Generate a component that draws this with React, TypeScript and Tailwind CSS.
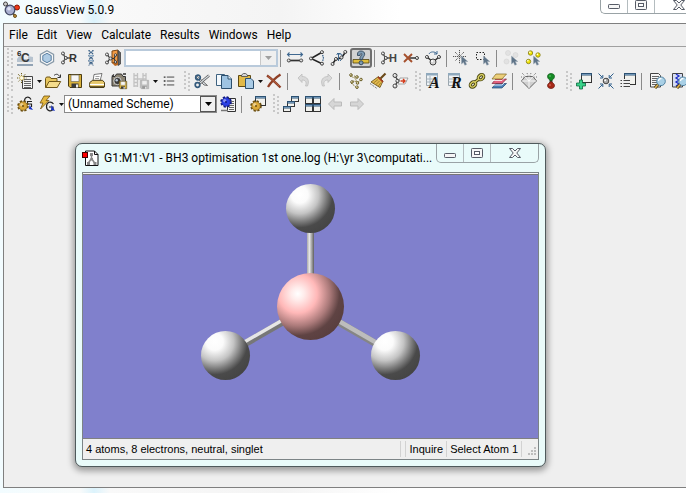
import React from 'react';

interface ToolButtonProps {
  label: string;
  icon: React.ReactNode;
  disabled?: boolean;
  pressed?: boolean;
}

interface DropArrowProps {
  label: string;
}

const Svg: React.FC<{ children: React.ReactNode; size?: number }> = ({ children, size = 16 }) => (
  <svg width={size} height={size} viewBox="0 0 16 16" fill="none" aria-hidden="true" className="shrink-0 overflow-visible">
    {children}
  </svg>
);

const Ball: React.FC<{ x: number; y: number; r?: number; fill?: string; stroke?: string }> = ({
  x,
  y,
  r = 1.5,
  fill = '#d8d8d8',
  stroke = '#333',
}) => (
  <>
    <circle cx={x} cy={y} r={r} fill={fill} stroke={stroke} strokeWidth="0.9" />
    <circle cx={x - r * 0.3} cy={y - r * 0.3} r={r * 0.35} fill="#fff" />
  </>
);

// Three-pronged fragment used by the molecule icons
const Fragment3: React.FC = () => (
  <>
    <path d="M2 3.500L4.500 8L2 12.500M4.500 8H9" stroke="#555" strokeWidth="1.400" />
    <Ball x={2} y={3.500} />
    <Ball x={2} y={12.500} />
    <Ball x={4.800} y={8} />
  </>
);

const Pointer: React.FC = () => (
  <path d="M8.500 6v8l2-1.800l1.300 3l1.800-.8l-1.300-2.900h2.500z" fill="#5f7488" stroke="#9aa8b4" strokeWidth="0.500" />
);

const Gear: React.FC<{ cx: number; cy: number; fill: string; stroke: string }> = ({ cx, cy, fill, stroke }) => (
  <>
    <circle cx={cx} cy={cy} r="4.800" stroke={stroke} strokeWidth="2" strokeDasharray="2.200 1.570" />
    <circle cx={cx} cy={cy} r="4.300" fill={fill} stroke={stroke} strokeWidth="0.600" />
    <circle cx={cx - 1.300} cy={cy - 1.300} r="1.600" fill="#fff" opacity="0.450" />
    <circle cx={cx} cy={cy} r="1" fill={stroke} />
  </>
);

const MiniWindow: React.FC<{ x: number; y: number; w: number; h: number }> = ({ x, y, w, h }) => (
  <>
    <rect x={x + 0.500} y={y + 0.500} width={w - 1} height={h - 1} fill="#f2f2ee" stroke="#333" />
    <rect x={x} y={y} width={w} height="2.500" fill="#2d5273" />
    <rect x={x + 1} y={y + 1} width={w - 2} height="0.700" fill="#8fb4d4" />
  </>
);

const Floppy: React.FC<{ x: number; y: number; s: number; grey?: boolean }> = ({ x, y, s, grey }) => (
  <g transform={`translate(${x} ${y}) scale(${s / 14})`}>
    <path d="M.5.5h13v13H2l-1.500-1.500z" fill={grey ? '#bdbdbd' : '#d9b13b'} stroke={grey ? '#aaa' : '#4a3c14'} />
    <path d="M3 1h8v6.500H3z" fill={grey ? '#eee' : '#f6f6f6'} stroke={grey ? '#b5b5b5' : '#77705a'} strokeWidth="0.700" />
    <path d="M3.500 9.500h7v4h-7z" fill={grey ? '#999' : '#3a3a3a'} />
    <path d="M8 10.500h2v3H8z" fill="#eee" />
  </g>
);

const Lens: React.FC = () => (
  <>
    <path d="M8 11.500l-3 3.500" stroke="#3f3214" strokeWidth="3" />
    <path d="M8 11.500l-3 3.500" stroke="#d9ad4a" strokeWidth="1.800" />
    <circle cx="11" cy="8.300" r="4.300" fill="#a9d0e6" stroke="#5585a3" />
    <path d="M8.500 8a2.700 2.700 0 0 1 3-2.500" stroke="#fff" strokeWidth="1.300" />
  </>
);

const Lines: React.FC<{ x: number; y: number; w: number; n: number; color?: string }> = ({
  x,
  y,
  w,
  n,
  color = '#666',
}) => (
  <>
    {Array.from({ length: n }, (_, i) => (
      <rect key={i} x={x} y={y + i * 2} width={w} height="1" fill={color} />
    ))}
  </>
);

const icons = {
  element: (
    <Svg>
      <path d="M3 5h4v4h4v-3l5 1v5H0V9z" fill="#b7c3cf" />
      <path d="M0 15h16" stroke="#7b90a5" strokeWidth="1.600" />
      <text x="0" y="6" fontFamily="Liberation Sans, sans-serif" fontWeight="700" fontSize="8" fill="#222">6</text>
      <text x="4" y="12" fontFamily="Liberation Sans, sans-serif" fontWeight="700" fontSize="12" fill="#3a3a3a">C</text>
    </Svg>
  ),
  ring: (
    <Svg>
      <path d="M8 .8l6.600 3.600v7.200L8 15.200L1.400 11.600V4.400z" fill="#f7f7f7" stroke="#8799a8" strokeWidth="1.200" />
      <path d="M8 3.300l4.200 2.300v4.800L8 12.700l-4.200-2.300V5.600z" fill="#aecbe4" stroke="#5a7fa1" />
    </Svg>
  ),
  rgroup: (
    <Svg>
      <Fragment3 />
      <text x="8" y="12" fontFamily="Liberation Sans, sans-serif" fontWeight="700" fontSize="11" fill="#333">R</text>
    </Svg>
  ),
  helix: (
    <Svg>
      <path d="M6 0c0 2.500 4 2.500 4 5s-4 3-4 5.500 4 2.500 4 5M10 0c0 2.500-4 2.500-4 5s4 3 4 5.500-4 2.500-4 5" stroke="#3e6388" strokeWidth="1.400" strokeDasharray="1.600 .6" />
      <path d="M6 5.500h4M6 10.500h4" stroke="#8fb0cc" />
    </Svg>
  ),
  fragmentLibrary: (
    <Svg>
      <path d="M7 1l6-1v11l-6 2z" fill="#f29b45" stroke="#7d4713" />
      <path d="M13 .5l2.500 2V14l-2.500 1.500z" fill="#666" stroke="#333" strokeWidth="0.700" />
      <path d="M7 13l6-2v4L10 16z" fill="#b96620" />
      <path d="M2 4l3 4.500L2 13M5 8.500h4l2 4M9 8.500l2-4" stroke="#333" strokeWidth="1.200" />
      <Ball x={2} y={4.500} />
      <Ball x={2} y={12.500} />
      <Ball x={5.500} y={8.500} />
      <Ball x={10.500} y={5} r={1.200} />
      <Ball x={10.500} y={12} r={1.200} />
    </Svg>
  ),
  bond: (
    <Svg>
      <path d="M0 4.500h16M2.500 2.500L.5 4.500l2 2M13.500 2.500l2 2-2 2" stroke="#3f6890" strokeWidth="1.100" />
      <path d="M2 10.500h12" stroke="#333" strokeWidth="1.700" />
      <Ball x={1.800} y={10.500} />
      <Ball x={14.200} y={10.500} />
    </Svg>
  ),
  angle: (
    <Svg>
      <path d="M12.500 2.500L2 8.500l10.500 5" stroke="#222" strokeWidth="1.500" />
      <path d="M13.500 5c1.200 2 1.200 4 0 6" stroke="#3f6890" strokeDasharray="1.500 .8" strokeWidth="1.300" />
      <Ball x={13} y={2.200} />
      <Ball x={2} y={8.500} />
      <Ball x={13} y={13.700} />
    </Svg>
  ),
  dihedral: (
    <Svg>
      <path d="M1.500 14l3.500-5 5.500-1 4-6" stroke="#222" strokeWidth="1.500" />
      <path d="M7.500 11V3.500M5.500 5l2-2 2 2M6 3.500h3.500c2.500 1 2 5-.5 7.500" stroke="#3f6890" />
      <Ball x={1.600} y={14} />
      <Ball x={5} y={9} />
      <Ball x={10.500} y={7.500} />
      <Ball x={14.300} y={2} />
    </Svg>
  ),
  inquire: (
    <Svg>
      <path d="M0 9.500h16v3.500H0z" fill="#e0be3c" stroke="#51430f" strokeWidth="0.800" />
      <path d="M4.500 5.500V4c0-2 1.500-3 3.500-3s3.700 1.200 3.700 3.200S9.500 7 9.500 9.500H6.800c0-3.500 2-3.500 2-5.200 0-1.200-1.700-1.200-1.700 1.200z" fill="#7f9bb3" stroke="#344a5e" strokeWidth="0.900" />
      <circle cx="8.100" cy="12.800" r="2" fill="#7f9bb3" stroke="#344a5e" />
    </Svg>
  ),
  addValence: (
    <Svg>
      <Fragment3 />
      <text x="8" y="12" fontFamily="Liberation Sans, sans-serif" fontWeight="700" fontSize="11" fill="#444">H</text>
    </Svg>
  ),
  deleteAtom: (
    <Svg>
      <path d="M4 8h10" stroke="#333" strokeWidth="1.500" />
      <path d="M1 4l8 8M9 4l-8 8" stroke="#a5502d" strokeWidth="1.900" />
      <Ball x={14} y={8} />
    </Svg>
  ),
  invert: (
    <Svg>
      <path d="M4 4c1-2.500 6-3 8 0M12 1v3H9" stroke="#3f6890" />
      <path d="M2 7l6 5 6-5" stroke="#333" strokeWidth="1.600" />
      <Ball x={2} y={7} />
      <Ball x={14} y={7} />
      <Ball x={8} y={12} r={3} />
    </Svg>
  ),
  selectAtom: (
    <Svg>
      <path d="M6.500 0v14M0 6.500h13M2 2l9 9M11 2l-9 9" stroke="#444" strokeWidth="0.900" strokeDasharray="1.200 .8" />
      <Pointer />
    </Svg>
  ),
  marquee: (
    <Svg>
      <rect x="1.500" y="2.500" width="8" height="7" stroke="#222" strokeDasharray="1.500 1.500" />
      <Pointer />
    </Svg>
  ),
  deselectAll: (
    <Svg>
      <circle cx="5" cy="3" r="2.500" fill="#e2e2e2" stroke="#d4d4d4" strokeWidth="0.600" />
      <circle cx="12.500" cy="5" r="2.500" fill="#e2e2e2" stroke="#d4d4d4" strokeWidth="0.600" />
      <circle cx="3.500" cy="11.500" r="2.500" fill="#e2e2e2" stroke="#d4d4d4" strokeWidth="0.600" />
      <Pointer />
    </Svg>
  ),
  selectAll: (
    <Svg>
      <Ball x={5.500} y={3} r={2.200} fill="#f2e600" stroke="#8c8420" />
      <Ball x={13} y={5} r={2.200} fill="#f2e600" stroke="#8c8420" />
      <Ball x={3.500} y={11.500} r={2.200} fill="#f2e600" stroke="#8c8420" />
      <Pointer />
    </Svg>
  ),
  newDoc: (
    <Svg>
      <path d="M5.500 3.500h10v12h-10z" fill="#f5f5f5" stroke="#444" />
      <Lines x={7} y={6} w={7} n={5} />
      <path d="M4.500 0v10M0 5h9.500M1 1l7.500 8M8.500 1L1 9" stroke="#6b5b16" strokeDasharray="1 .8" />
      <circle cx="4.700" cy="5" r="2" fill="#fffbe6" stroke="#d8bb4c" strokeWidth="0.500" />
    </Svg>
  ),
  open: (
    <Svg>
      <path d="M.5 14.500V5.500l1-1.500h3.500l1 1.500h6v9z" fill="#e8c75e" stroke="#6e5618" />
      <path d="M.8 14.500L4 8.500h11.700l-3.500 6z" fill="#f6dd8c" stroke="#6e5618" />
      <path d="M9 2.500c2-2 4.500-1.500 5.500 1M15.500 1.500v3h-3" stroke="#333" />
    </Svg>
  ),
  save: (
    <Svg>
      <Floppy x={1} y={1} s={14} />
    </Svg>
  ),
  print: (
    <Svg>
      <path d="M5 1.500l8-1-2 7.500H4z" fill="#fff" stroke="#555" strokeWidth="0.800" />
      <path d="M6.500 3.500h4M6 5.500h4" stroke="#888" strokeWidth="0.800" />
      <path d="M.7 9.500l3-2.200h9.800l2 2.200v4.500H.7z" fill="#e6c768" stroke="#4b3d16" />
      <path d="M1 11.500h14" stroke="#fff" strokeWidth="1.200" />
      <path d="M1 13.500h14v1.500H1z" fill="#4b3d16" />
    </Svg>
  ),
  camera: (
    <Svg>
      <path d="M1 3.500h3l1.500-2.500h5l1.500 2.500h2.500V13H1z" fill="#8c8574" stroke="#333" />
      <path d="M1 3.500l2-2M12 1h3" stroke="#333" strokeWidth="1.400" />
      <circle cx="6.500" cy="8" r="3.700" fill="#3b3b3b" stroke="#ddd" strokeWidth="0.900" />
      <circle cx="5.700" cy="7.200" r="1.200" fill="#bcd" />
      <Floppy x={8} y={8} s={8} />
    </Svg>
  ),
  movie: (
    <Svg>
      <path d="M1 0v14M4.500 0v14M10 0v14M13 0v7M1 2.500h3.500M1 6h12M1 9.500h3.500M10 2.500h3M1 13h3.500" stroke="#c2c2c2" strokeWidth="1.300" />
      <Floppy x={7} y={7} s={9} grey />
    </Svg>
  ),
  list: (
    <Svg size={14}>
      <path d="M5.500 3.500H14M5.500 8H14M5.500 12.500H14" stroke="#333" />
      <path d="M2 3.500h2M2 8h2M2 12.500h2" stroke="#333" strokeWidth="1.500" />
    </Svg>
  ),
  cut: (
    <Svg>
      <path d="M2 2l11.500 10.500L10 12 1.500 3.500z" fill="#d7dde2" stroke="#555" strokeWidth="0.800" />
      <path d="M15 2.500L5.500 10.500" stroke="#555" strokeWidth="2.600" />
      <path d="M15 2.500L6 10" stroke="#d7dde2" strokeWidth="1.200" />
      <circle cx="3.500" cy="12" r="2.300" stroke="#345a7c" strokeWidth="1.700" />
      <circle cx="4" cy="4.500" r="2.300" stroke="#345a7c" strokeWidth="1.700" />
    </Svg>
  ),
  copy: (
    <Svg>
      <path d="M.5 1.500h8v11h-8z" fill="#f4f9fd" stroke="#3e6280" />
      <path d="M5.500 2.500h6.500l3.500 3.500v9.500h-10z" fill="#9fc4e2" stroke="#2d506e" />
      <path d="M12 2.500V6h3.500" fill="#e8f2fa" stroke="#2d506e" />
    </Svg>
  ),
  paste: (
    <Svg>
      <path d="M.5 2.500h12v11H.5z" fill="#e1b948" stroke="#5f4a12" />
      <path d="M3.500 3.500V2l2-1.500h2L9.500 2v1.500z" fill="#d5d5d5" stroke="#444" strokeWidth="0.800" />
      <path d="M7.500 5.500h5.500l2.500 2.500v7.500h-8z" fill="#a9cbe6" stroke="#2d506e" />
    </Svg>
  ),
  remove: (
    <Svg>
      <path d="M1 2.500c5 3.500 9 7.500 13.500 12M14.500 1.500C9 5 5 9 2 14" stroke="#8f3f26" strokeWidth="2.300" />
      <path d="M2 3.500c5 3.500 7 5.500 11 9.500" stroke="#c66b4a" strokeWidth="0.700" />
    </Svg>
  ),
  undo: (
    <Svg>
      <path d="M2 5l4-4v2.500c5 0 8 3.500 5.500 9.500h-2c1.500-4 0-6-3.500-6V9.500z" fill="#d9d9d9" stroke="#bcbcbc" strokeWidth="0.800" />
    </Svg>
  ),
  redo: (
    <Svg>
      <path d="M14 5l-4-4v2.500c-5 0-8 3.500-5.500 9.500h2c-1.500-4 0-6 3.500-6V9.500z" fill="#d9d9d9" stroke="#bcbcbc" strokeWidth="0.800" />
    </Svg>
  ),
  rebond: (
    <Svg>
      <path d="M2 3l5 2 2 4M5 8l5 1 4-3M3 10l5 4M6 3l4 1" stroke="#8b7c36" strokeDasharray="1.500 .8" />
      <Ball x={3} y={2} r={1.300} fill="#d8c98a" stroke="#5e5420" />
      <Ball x={9} y={4} r={1.300} fill="#d8c98a" stroke="#5e5420" />
      <Ball x={13} y={6.500} r={1.300} fill="#d8c98a" stroke="#5e5420" />
      <Ball x={4} y={9} r={1.300} fill="#d8c98a" stroke="#5e5420" />
      <Ball x={9.500} y={10} r={1.300} fill="#d8c98a" stroke="#5e5420" />
      <Ball x={9} y={14.200} r={1.300} fill="#d8c98a" stroke="#5e5420" />
    </Svg>
  ),
  clean: (
    <Svg>
      <path d="M15.500.5L10.500 5.500" stroke="#6b4a1a" strokeWidth="2.200" />
      <path d="M8.500 3.500l4.500 4.500-3 6.500L1 9z" fill="#e3b94c" stroke="#5f4a12" strokeWidth="0.800" />
      <path d="M8 4l5 5" stroke="#a33a22" strokeWidth="1.600" />
      <path d="M8 6.500l-4.500 3.500M9.500 8l-4 4M11 9.500l-3 4" stroke="#8a6a1c" strokeWidth="0.700" />
      <path d="M0 10.500l7 5" stroke="#555" strokeDasharray="1 1" />
    </Svg>
  ),
  symmetrize: (
    <Svg>
      <path d="M3 3l3 4.500L3 13M6 7.500h9" stroke="#444" strokeWidth="1.300" />
      <path d="M8 5h8l-3 6H6z" fill="#f7f7f7" stroke="#888" strokeWidth="0.700" />
      <path d="M8.500 8h4M11 6l2 2-2 2" stroke="#d33a1a" strokeWidth="1.400" />
      <Ball x={3} y={2.500} r={2} />
      <Ball x={3} y={13} r={2} />
      <Ball x={5.500} y={8} r={1.600} />
    </Svg>
  ),
  atomList: (
    <Svg>
      <path d="M1.500.500h11v12h-11z" fill="#eef3f7" stroke="#9aa5ad" />
      <path d="M1 0h12v2.500H1z" fill="#8fa9bd" />
      <path d="M1.500 6h11M1.500 9h11M5 3v9" stroke="#a5b2bc" />
      <text x="4" y="15" fontFamily="Liberation Serif, serif" fontStyle="italic" fontWeight="700" fontSize="16" fill="#111">A</text>
    </Svg>
  ),
  redundant: (
    <Svg>
      <path d="M1.500.500h11v12h-11z" fill="#eef3f7" stroke="#9aa5ad" />
      <path d="M1 0h12v2.500H1z" fill="#8fa9bd" />
      <path d="M1.500 6h11M1.500 9h11" stroke="#a5b2bc" />
      <text x="4" y="15" fontFamily="Liberation Serif, serif" fontStyle="italic" fontWeight="700" fontSize="16" fill="#111">R</text>
    </Svg>
  ),
  link: (
    <Svg>
      <g stroke="#4b4712" strokeWidth="3.200">
        <ellipse cx="4" cy="11.500" rx="3" ry="2.200" transform="rotate(-40 4 11.500)" />
        <ellipse cx="12" cy="4.200" rx="3" ry="2.200" transform="rotate(-40 12 4.200)" />
        <path d="M5.500 9.500L10 6" />
      </g>
      <g stroke="#d6cd62" strokeWidth="1.300">
        <ellipse cx="4" cy="11.500" rx="3" ry="2.200" transform="rotate(-40 4 11.500)" />
        <ellipse cx="12" cy="4.200" rx="3" ry="2.200" transform="rotate(-40 12 4.200)" />
        <path d="M5.500 9.500L10 6" />
      </g>
    </Svg>
  ),
  layers: (
    <Svg>
      <path d="M1 15l4-4.500h10.500L11 15z" fill="#4a80b8" stroke="#24486c" strokeWidth="0.700" />
      <path d="M1 10.500L5 6h10.500L11 10.500z" fill="#e0607e" stroke="#7d2438" strokeWidth="0.700" />
      <path d="M1 6l4-5h10.500L11 6z" fill="#edd07c" stroke="#7d6520" strokeWidth="0.700" />
      <path d="M1.500 7.500H11l4-4M1.500 12H11l4-4" stroke="#fff" strokeWidth="0.800" />
    </Svg>
  ),
  pointGroup: (
    <Svg>
      <path d="M4 3.500h8l3.500 4.500L8 15.500.5 8z" fill="#cfcfcf" stroke="#666" />
      <path d="M4 3.500L8 8l4-4.500M1 8h14M8 8v7M8 3.500V8" stroke="#fff" strokeWidth="0.800" />
      <path d="M1 0l3 3M6 0l1 2.500M15 0l-3 3M10 0L9 2.500M0 4h2.500M16 4h-2.500" stroke="#777" strokeDasharray="1 1" />
    </Svg>
  ),
  orbitals: (
    <Svg>
      <path d="M8 7v3" stroke="#444" strokeWidth="3" />
      <path d="M8 8C5 6 4.500 4.500 4.500 3.500 4.500 1.500 6 .5 8 .5s3.500 1 3.500 3C11.500 4.500 11 6 8 8z" fill="#158a25" stroke="#0b5515" strokeWidth="0.700" />
      <path d="M8 8.500c-3 2-3.500 3-3.500 4 0 2 1.500 3 3.500 3s3.500-1 3.500-3c0-1-.5-2-3.500-4z" fill="#a62817" stroke="#67150b" strokeWidth="0.700" />
      <circle cx="7" cy="3" r="0.800" fill="#6cd57a" />
      <circle cx="7" cy="12" r="0.800" fill="#e88270" />
    </Svg>
  ),
  addView: (
    <Svg>
      <MiniWindow x={5} y={0} w={11} h={10} />
      <path d="M3.500 7h3v3h3v3h-3v3h-3v-3h-3v-3h3z" fill="#3ad28a" stroke="#0e6b40" strokeWidth="0.800" />
    </Svg>
  ),
  center: (
    <Svg>
      <path d="M.5.500l4 4M15.500.500l-4 4M.5 15.500l4-4M15.500 15.500l-4-4M4.800 2v3H2M11.200 2v3H14M4.800 14v-3H2M11.200 14v-3H14" stroke="#2f5f8c" />
      <Ball x={8} y={8} r={2.800} fill="#aaa" />
    </Svg>
  ),
  viewList: (
    <Svg>
      <MiniWindow x={4} y={0} w={12} h={12} />
      <path d="M0 6h10v9.500H0z" fill="#efefef" />
      <path d="M3.500 7.500H10M3.500 10.500H10M3.500 13.500H10M.5 7.500H2M.5 10.500H2M.5 13.500H2" stroke="#444" />
    </Svg>
  ),
  viewFile: (
    <Svg>
      <path d="M.5.500h8l2 2v11.500H.5z" fill="#f5f5f5" stroke="#444" />
      <Lines x={2} y={3} w={7} n={5} />
      <Lens />
    </Svg>
  ),
  viewPlot: (
    <Svg>
      <path d="M.5.500h10v13.500H.5z" fill="#d5dcf2" stroke="#444" />
      <path d="M4 1l3 2-3 2 3 2-3 2 3 2-3 2" stroke="#1c2cc8" strokeWidth="1.300" />
      <Lens />
    </Svg>
  ),
  gaussSetup: (
    <Svg>
      <path d="M14 3.500C12-.5 7.500 1 7.500 5M15 5.500h-4.500v2.500h4v3" stroke="#222" strokeWidth="1.200" />
      <path d="M12.500 9l3.500 5-4-1z" fill="#1631c4" />
      <Gear cx={6} cy={10} fill="#dba93a" stroke="#6e500f" />
    </Svg>
  ),
  quickLaunch: (
    <Svg>
      <path d="M14.500 8C12 4.500 7.500 6 7.500 10.500S12 16 14 13.500V11h-4" stroke="#222" strokeWidth="1.200" />
      <path d="M5 0h6L7 4.500h3L1.500 13l2.500-6H1z" fill="#e5b83f" stroke="#6e500f" strokeWidth="0.800" />
      <path d="M12.500 9l3.500 6-4-1z" fill="#1631c4" />
    </Svg>
  ),
  schemes: (
    <Svg>
      <path d="M7.500 2.500h8v13h-8z" fill="#f5f5f5" stroke="#333" />
      <Lines x={9} y={5} w={5} n={5} />
      <Gear cx={6} cy={6} fill="#2a3fe6" stroke="#101a86" />
      <path d="M1 14.500h7" stroke="#777" strokeWidth="1.500" />
    </Svg>
  ),
  windowSetup: (
    <Svg>
      <MiniWindow x={5} y={0} w={11} h={10} />
      <Gear cx={6} cy={10} fill="#dba93a" stroke="#6e500f" />
    </Svg>
  ),
  cascade: (
    <Svg>
      <MiniWindow x={8} y={0} w={8} h={6} />
      <MiniWindow x={4} y={5} w={8} h={6} />
      <MiniWindow x={0} y={10} w={8} h={6} />
    </Svg>
  ),
  tile: (
    <Svg>
      <MiniWindow x={0} y={0} w={8} h={8} />
      <MiniWindow x={8} y={0} w={8} h={8} />
      <MiniWindow x={0} y={8} w={8} h={8} />
      <MiniWindow x={8} y={8} w={8} h={8} />
    </Svg>
  ),
  back: (
    <Svg>
      <path d="M1.500 8L7 2.500V6h7.500v4H7v3.500z" fill="#d6d6d6" stroke="#bbb" />
    </Svg>
  ),
  forward: (
    <Svg>
      <path d="M14.500 8L9 2.500V6H1.500v4H9v3.500z" fill="#d6d6d6" stroke="#bbb" />
    </Svg>
  ),
};

const ToolButton: React.FC<ToolButtonProps> = ({ label, icon, disabled, pressed }) => (
  <button
    type="button"
    aria-label={label}
    title={label}
    disabled={disabled}
    className={`w-[22px] h-5 shrink-0 flex items-center justify-center rounded-[3px] ${
      pressed ? 'bg-[#d2d2d2] border-2 border-[#6e6e6e]' : ''
    }`}
  >
    {icon}
  </button>
);

const DropArrow: React.FC<DropArrowProps> = ({ label }) => (
  <button type="button" aria-label={label} className="w-1.5 h-5 shrink-0 flex items-center justify-center">
    <svg width="5" height="3" viewBox="0 0 5 3" aria-hidden="true">
      <path d="M0 0h5L2.500 3z" fill="#111" />
    </svg>
  </button>
);

const Grip: React.FC = () => (
  <svg width="10" height="20" viewBox="0 0 10 20" aria-hidden="true" className="shrink-0">
    {[1, 5, 9, 13, 17].map((y) => (
      <g key={y}>
        <rect x="3" y={y - 1} width="2" height="2" fill="#c8c8c8" />
        <rect x="7" y={y + 1} width="2" height="2" fill="#c8c8c8" />
      </g>
    ))}
  </svg>
);

const Sep: React.FC<{ wide?: boolean }> = ({ wide }) => (
  <div className={`shrink-0 h-[17px] flex pl-0.5 ${wide ? 'w-2' : 'w-1.5'}`}>
    <div className="w-px bg-[#8a8a8a]" />
  </div>
);

const ToolRow: React.FC<{ children: React.ReactNode }> = ({ children }) => (
  <div className="h-[23px] flex items-start gap-px pt-px">{children}</div>
);

const ToolBar: React.FC<{ label: string; children: React.ReactNode }> = ({ label, children }) => (
  <div role="toolbar" aria-label={label} className="flex items-center shrink-0">
    <Grip />
    {children}
  </div>
);

const CaptionButtons: React.FC<{ className?: string }> = ({ className = '' }) => (
  <div className={`flex shrink-0 border border-t-0 border-[#9aa3a6] rounded-b-[5px] divide-x divide-[#b4bcbf] ${className}`}>
    <button type="button" aria-label="Minimize" className="w-[27px] shrink-0 flex items-center justify-center pt-1">
      <svg width="12" height="5" viewBox="0 0 12 5" aria-hidden="true">
        <rect x="0.5" y="0.5" width="11" height="4" rx="0.8" fill="#f6f6f6" stroke="#565b66" />
      </svg>
    </button>
    <button type="button" aria-label="Maximize" className="w-[27px] shrink-0 flex items-center justify-center">
      <svg width="12" height="10" viewBox="0 0 12 10" aria-hidden="true">
        <rect x="0.5" y="0.5" width="11" height="9" rx="0.8" fill="#f6f6f6" stroke="#565b66" />
        <rect x="3.5" y="3.500" width="5" height="3" fill="#fff" stroke="#565b66" />
      </svg>
    </button>
    <button type="button" aria-label="Close" className="w-[47px] shrink-0 flex items-center justify-center">
      <svg width="12" height="10" viewBox="0 0 12 10" aria-hidden="true">
        <path d="M.5.500h3L6 3l2.500-2.500h3L7.800 5l3.700 4.500h-3L6 7 3.500 9.500h-3L4.200 5z" fill="#f6f6f6" stroke="#565b66" />
      </svg>
    </button>
  </div>
);

const menus = ['File', 'Edit', 'View', 'Calculate', 'Results', 'Windows', 'Help'];

const hydrogens = [
  { x: 227.500, y: 33.500 },
  { x: 142.500, y: 180.500 },
  { x: 312.500, y: 180.500 },
];

const Molecule: React.FC = () => (
  <svg viewBox="0 0 455 263" className="block w-full" role="img" aria-label="BH3 molecule">
    <defs>
      <radialGradient id="hydrogen" cx="0.280" cy="0.220" r="0.860">
        <stop offset="0" stopColor="#fff" />
        <stop offset="0.200" stopColor="#fbfbfb" />
        <stop offset="0.450" stopColor="#c4c4c4" />
        <stop offset="0.640" stopColor="#7c7c7c" />
        <stop offset="0.780" stopColor="#4a4a4a" />
        <stop offset="1" stopColor="#444" />
      </radialGradient>
      <radialGradient id="boron" cx="0.310" cy="0.310" r="0.800">
        <stop offset="0" stopColor="#fff" />
        <stop offset="0.120" stopColor="#ffeceb" />
        <stop offset="0.360" stopColor="#ffb8b8" />
        <stop offset="0.600" stopColor="#ab7a7a" />
        <stop offset="0.780" stopColor="#5f4343" />
        <stop offset="1" stopColor="#573d3d" />
      </radialGradient>
      <linearGradient id="stick" x1="224" x2="231" y1="0" y2="0" gradientUnits="userSpaceOnUse">
        <stop offset="0" stopColor="#aaa" />
        <stop offset="0.350" stopColor="#e6e6e6" />
        <stop offset="1" stopColor="#5f5f5f" />
      </linearGradient>
    </defs>
    <path d="M224 50h7v60h-7z" fill="url(#stick)" />
    <path d="M142.500 180l85-49" stroke="#777" strokeWidth="7" />
    <path d="M141.500 178.500l85-49" stroke="#e6e6e6" strokeWidth="3.500" />
    <path d="M312.500 180l-85-49" stroke="#858585" strokeWidth="7" />
    <path d="M313 179l-85-49" stroke="#bdbdbd" strokeWidth="4.500" />
    {hydrogens.map((h) => (
      <circle key={`${h.x}-${h.y}`} cx={h.x} cy={h.y} r="24.500" fill="url(#hydrogen)" />
    ))}
    <circle cx="227.500" cy="131.500" r="33.500" fill="url(#boron)" />
  </svg>
);

const ViewWindow: React.FC = () => (
  <section className="w-[471px] px-1.5 pb-1.5 flex flex-col bg-[#e9fbfa] border border-[#4f5a5c] rounded-[7px] shadow-[0_2px_6px_2px_rgba(0,0,0,0.35)]">
    <header className="h-7 flex items-start">
      <h2 className="flex-1 min-w-0 h-7 flex items-center gap-[5px] whitespace-nowrap">
        <svg width="17" height="16" viewBox="0 0 17 16" aria-hidden="true" className="shrink-0">
          <path d="M3.500 1h9l3.500 3.500V15.500H3.500z" fill="#fff" stroke="#111" />
          <path d="M12.500 1v3.500H16" stroke="#111" fill="none" />
          <path d="M9.500 3.500v5l-3.500 5M9.500 8.500l3.500 5" stroke="#888" strokeWidth="1.500" fill="none" />
          <path d="M8 3h3v3H8zM5 12h3v3H5zM11.500 12h3v3h-3zM8.500 8h2.500v2.500H8.500z" fill="#888" />
          <rect x="0.5" y="2.500" width="5" height="5" fill="#f00" stroke="#400" />
        </svg>
        G1:M1:V1 - BH3 optimisation 1st one.log (H:\yr 3\computati...
      </h2>
      <CaptionButtons className="h-[19px]" />
    </header>
    <div className="border border-[#7c8486]">
      <div className="border-t border-[#f4f4f4] bg-[#8080cc]">
        <div className="border-t border-[#777]">
          <Molecule />
        </div>
      </div>
      <footer className="h-[21px] pl-[3px] flex items-center bg-[#efefef] border-t border-[#808080] font-['Liberation_Sans',sans-serif] text-[11px] leading-4">
        <span className="flex-1">4 atoms, 8 electrons, neutral, singlet</span>
        <span className="w-1.5 h-4 border-x border-[#d2d2d2]" />
        <span className="px-[3px] border-r border-[#d2d2d2]">Inquire</span>
        <span className="px-[3px] border-r border-[#d2d2d2]">Select Atom 1</span>
        <svg width="16" height="16" viewBox="0 0 16 16" aria-hidden="true">
          <path d="M12 6h2v2h-2zM9 9h2v2H9zM12 9h2v2h-2zM6 12h2v2H6zM9 12h2v2H9zM12 12h2v2h-2z" fill="#bdbdbd" />
        </svg>
      </footer>
    </div>
  </section>
);

export default function App() {
  return (
    <div className="min-h-screen flex flex-col overflow-hidden pl-[3px] pb-[5px] bg-[linear-gradient(90deg,#f2fcff_0,#f9fbfb_80px,#dcf3fc_94px,#f9f9f9_110px,#f4f4f4_280px,#fff_400px)] font-['Roboto',sans-serif] text-xs leading-4 text-black">
      <header className="h-[23px] flex items-start">
        <h1 className="flex-1 flex items-center gap-[5px] pt-px">
          <svg width="17" height="17" viewBox="0 0 17 17" aria-hidden="true" className="shrink-0">
            <path d="M7 8L3 3M8 8l6-2M9 11l3 4" stroke="#6b5327" strokeWidth="2" />
            <circle cx="2.500" cy="3" r="2" fill="#ccc" stroke="#444" />
            <circle cx="14" cy="6.500" r="2.500" fill="#ee3a1a" stroke="#8a1a08" />
            <circle cx="7" cy="9" r="4.800" fill="#a9afd0" stroke="#444a66" strokeWidth="1.300" />
            <circle cx="6" cy="7.700" r="1.800" fill="#dfe3f5" />
            <circle cx="12" cy="15" r="1.500" fill="#c79334" stroke="#6b5327" />
          </svg>
          <span>GaussView 5.0.9</span>
        </h1>
        <CaptionButtons className="h-[18px] -mt-1 w-[86px] overflow-hidden rounded-br-none border-r-0" />
      </header>

      <main className="flex-1 flex flex-col bg-[#efefef] border border-r-0 border-[#7f7f7f]">
        <nav className="h-[23px] flex items-center gap-[9px] pl-[5px] border-b border-[#a0a0a0]">
          {menus.map((m) => (
            <button key={m} type="button" className="shrink-0">
              {m}
            </button>
          ))}
        </nav>

        <ToolRow>
          <ToolBar label="Builder">
            <ToolButton label="Element Fragment" icon={icons.element} />
            <ToolButton label="Ring Fragment" icon={icons.ring} />
            <ToolButton label="R-Group Fragment" icon={icons.rgroup} />
            <ToolButton label="Biological Fragment" icon={icons.helix} />
            <ToolButton label="Custom Fragment" icon={icons.fragmentLibrary} />
            <div className="w-[154px] h-[18px] shrink-0 flex bg-white border-2 border-[#b9cadb]">
              <select aria-label="Fragment" disabled className="flex-1 min-w-0 appearance-none" />
              <span className="w-4 flex items-center justify-center bg-[#efefef] border-l border-[#c8c8c8]">
                <svg width="7" height="4" viewBox="0 0 7 4" aria-hidden="true">
                  <path d="M0 0h7L3.500 4z" fill="#a0a0a0" />
                </svg>
              </span>
            </div>
            <Sep />
            <ToolButton label="Modify Bond" icon={icons.bond} />
            <ToolButton label="Modify Angle" icon={icons.angle} />
            <ToolButton label="Modify Dihedral" icon={icons.dihedral} />
            <ToolButton label="Inquire" icon={icons.inquire} pressed />
            <Sep />
            <ToolButton label="Add Valence" icon={icons.addValence} />
            <ToolButton label="Delete Atom" icon={icons.deleteAtom} />
            <ToolButton label="Invert Atom" icon={icons.invert} />
            <Sep />
            <ToolButton label="Select Atoms by Clicking" icon={icons.selectAtom} />
            <ToolButton label="Select Atoms by Marquee" icon={icons.marquee} />
            <Sep />
            <ToolButton label="Deselect All Atoms" icon={icons.deselectAll} disabled />
            <ToolButton label="Select All Atoms" icon={icons.selectAll} />
          </ToolBar>
        </ToolRow>

        <ToolRow>
          <ToolBar label="File">
            <ToolButton label="New" icon={icons.newDoc} />
            <DropArrow label="New options" />
            <ToolButton label="Open" icon={icons.open} />
            <ToolButton label="Save" icon={icons.save} />
            <ToolButton label="Print" icon={icons.print} />
            <ToolButton label="Save Image" icon={icons.camera} />
            <ToolButton label="Save Movie" icon={icons.movie} disabled />
            <DropArrow label="Movie options" />
            <ToolButton label="Preferences" icon={icons.list} />
          </ToolBar>
          <ToolBar label="Edit">
            <ToolButton label="Cut" icon={icons.cut} />
            <ToolButton label="Copy" icon={icons.copy} />
            <ToolButton label="Paste" icon={icons.paste} />
            <DropArrow label="Paste options" />
            <ToolButton label="Delete" icon={icons.remove} />
            <Sep wide />
            <ToolButton label="Undo" icon={icons.undo} disabled />
            <ToolButton label="Redo" icon={icons.redo} disabled />
            <Sep wide />
            <ToolButton label="Rebond" icon={icons.rebond} />
            <ToolButton label="Clean" icon={icons.clean} />
            <ToolButton label="Symmetrize" icon={icons.symmetrize} />
          </ToolBar>
          <ToolBar label="Editors">
            <ToolButton label="Atom List" icon={icons.atomList} />
            <ToolButton label="Redundant Coordinates" icon={icons.redundant} />
            <ToolButton label="Connection" icon={icons.link} />
            <ToolButton label="ONIOM Layers" icon={icons.layers} />
            <Sep wide />
            <ToolButton label="Point Group" icon={icons.pointGroup} />
            <ToolButton label="Orbitals" icon={icons.orbitals} />
          </ToolBar>
          <ToolBar label="View">
            <ToolButton label="Add View" icon={icons.addView} />
            <ToolButton label="Center" icon={icons.center} />
            <ToolButton label="View List" icon={icons.viewList} />
            <Sep wide />
            <ToolButton label="View File" icon={icons.viewFile} />
            <ToolButton label="View Plot" icon={icons.viewPlot} />
          </ToolBar>
        </ToolRow>

        <ToolRow>
          <ToolBar label="Calculate">
            <ToolButton label="Gaussian Calculation Setup" icon={icons.gaussSetup} />
            <ToolButton label="Quick Launch" icon={icons.quickLaunch} />
            <DropArrow label="Quick Launch options" />
            <div className="w-[153px] h-[18px] shrink-0 flex bg-white border border-[#8a8a8a]">
              <select aria-label="Scheme" className="flex-1 min-w-0 appearance-none pl-[3px]">
                <option>(Unnamed Scheme)</option>
              </select>
              <span className="w-4 flex items-center justify-center bg-[#efefef] border border-[#555]">
                <svg width="7" height="4" viewBox="0 0 7 4" aria-hidden="true">
                  <path d="M0 0h7L3.500 4z" fill="#000" />
                </svg>
              </span>
            </div>
            <ToolButton label="Edit Schemes" icon={icons.schemes} />
            <Sep wide />
            <ToolButton label="Current Jobs" icon={icons.windowSetup} />
          </ToolBar>
          <ToolBar label="Windows">
            <ToolButton label="Cascade" icon={icons.cascade} />
            <ToolButton label="Tile" icon={icons.tile} />
            <ToolButton label="Previous" icon={icons.back} disabled />
            <ToolButton label="Next" icon={icons.forward} disabled />
          </ToolBar>
        </ToolRow>

        <div className="pl-[71px] pt-[27px] pb-5">
          <ViewWindow />
        </div>
      </main>
    </div>
  );
}
